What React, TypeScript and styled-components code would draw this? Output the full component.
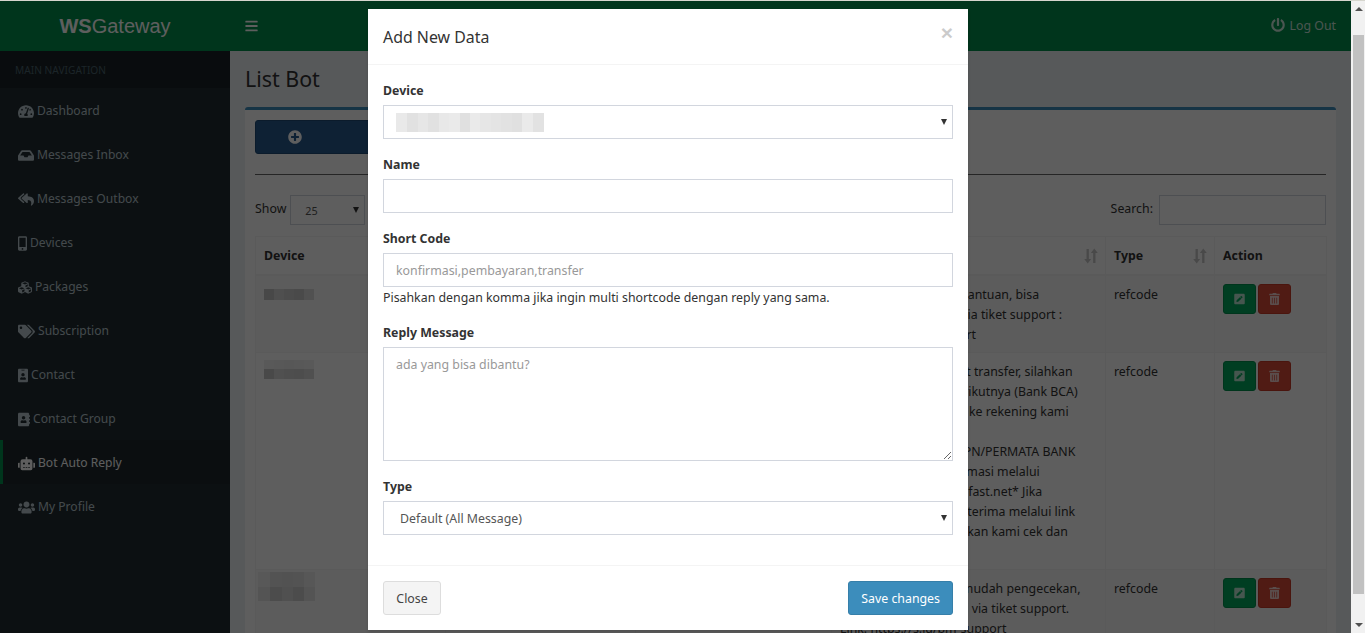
import React from "react";
import styled, { createGlobalStyle } from "styled-components";
import {
  FaTachometerAlt, FaInbox, FaReplyAll, FaMobileAlt, FaCubes, FaTags, FaIdBadge,
  FaAddressBook, FaRobot, FaUsers, FaPowerOff, FaBars, FaPlusCircle, FaPenSquare, FaTrashAlt,
} from "react-icons/fa";

const sans = `"Noto Sans", "Open Sans", sans-serif`;
const base = "12.35px";

const Global = createGlobalStyle`
  html, body { margin: 0; padding: 0; height: 100%; overflow: hidden; background: #ecf0f5; }
  * { box-sizing: border-box; }
  body { font-family: ${sans}; font-size: ${base}; line-height: 20px; color: #333; }
`;

const Root = styled.div`
  height: 633px;
  display: flex;
  border-top: 1px solid #d6d6ce;
  overflow: hidden;
`;
const Page = styled.div`
  position: relative;
  width: 1351px;
  flex: none;
  height: 632px;
  display: flex;
  flex-direction: column;
`;
const Rail = styled.div`
  flex: 1;
  display: flex;
  flex-direction: column;
  background: #f1f1f1;
`;
const Arrow = styled.span<{ $dir: "up" | "down" }>`
  display: block;
  width: 0;
  height: 0;
  margin: ${(p) => (p.$dir === "up" ? "6px 0 24px 4px" : "29px 0 0 4px")};
  border-left: 4px solid transparent;
  border-right: 4px solid transparent;
  ${(p) => (p.$dir === "up" ? "border-bottom: 4px solid #505050;" : "border-top: 4px solid #505050;")}
`;
const Thumb = styled.div`
  width: 11px;
  height: 559px;
  margin-left: 2px;
  background: #c1c1c1;
`;
const Topbar = styled.header`
  height: 50px;
  flex: none;
  display: flex;
  align-items: center;
  background: #008f4d;
  color: #fff;
`;
const Logo = styled.div`
  width: 230px;
  text-align: center;
  font: 20px/50px "Liberation Sans", Arial, sans-serif;
  b { font-weight: 700; }
`;
const Burger = styled.span`
  margin-left: 15px;
  display: flex;
  svg { width: 13px; height: 14px; }
`;
const LogOut = styled.span`
  margin-left: auto;
  padding-right: 15px;
  display: flex;
  align-items: center;
  gap: 5px;
  color: rgba(255, 255, 255, 0.8);
  svg { width: 14px; height: 14px; position: relative; top: -1px; }
`;
const Middle = styled.div`
  flex: 1;
  display: flex;
  min-height: 0;
`;
const Sidebar = styled.aside`
  width: 230px;
  flex: none;
  background: #222d32;
`;
const NavHead = styled.div`
  height: 37px;
  padding: 1px 0 0 15px;
  background: #1a2226;
  color: #4b646f;
  font-size: 10.2px;
  line-height: 36px;
`;
const NavItem = styled.div<{ $active?: boolean; $w: number }>`
  height: 44px;
  padding: 2px 0 0 15px;
  display: flex;
  align-items: center;
  gap: 3px;
  font-size: 12.1px;
  border-left: 3px solid ${(p) => (p.$active ? "#008f4d" : "transparent")};
  background: ${(p) => (p.$active ? "#1e282c" : "transparent")};
  color: ${(p) => (p.$active ? "#fff" : "#b8c7ce")};
  svg { width: ${(p) => p.$w}px; height: 15px; flex: none; }
`;
const Content = styled.main`
  flex: 1;
  min-width: 0;
  padding: 15px 15px 0;
  overflow: hidden;
`;
const Title = styled.h1`
  margin: 0 0 15px;
  font-size: 21.4px;
  font-weight: 400;
  line-height: 26px;
`;
const Box = styled.section`
  background: #fff;
  border-top: 3px solid #3c8dbc;
  border-radius: 3px;
  padding: 10px;
  height: 600px;
`;
const AddButton = styled.button`
  height: 34px;
  width: 170px;
  padding: 0 0 0 32px;
  display: flex;
  align-items: center;
  background: #285b8e;
  border: 1px solid #1f4b75;
  border-radius: 3px;
  color: #fff;
  svg { width: 14px; height: 14px; flex: none; }
`;
const Rule = styled.hr`
  margin: 20px 0;
  border: 0;
  border-top: 1px solid #666;
`;
const Controls = styled.div`
  height: 30px;
  display: flex;
  justify-content: space-between;
`;
const Inline = styled.label`
  display: flex;
  align-items: flex-start;
  gap: 4px;
  line-height: 28px;
`;
const SelectWrap = styled.div`
  position: relative;
  &::after {
    content: "";
    position: absolute;
    right: 6px;
    top: 50%;
    margin-top: -3px;
    border-left: 3px solid transparent;
    border-right: 3px solid transparent;
    border-top: 6px solid #333;
    pointer-events: none;
  }
`;
const SmallSelect = styled.select`
  display: block;
  width: 75px;
  height: 30px;
  padding: 5px 14px;
  border: 1px solid #d2d6de;
  border-radius: 0;
  appearance: none;
  background-color: #fff;
  color: #555;
  font: 10.8px ${sans};
`;
const SearchInput = styled.input`
  width: 167px;
  height: 30px;
  margin-left: 2px;
  border: 1px solid #d2d6de;
  background: #fff;
`;
const Table = styled.table`
  width: 1071px;
  margin-top: 11px;
  border-collapse: collapse;
  table-layout: fixed;
  border: 1px solid #f4f4f4;
`;
const Th = styled.th`
  position: relative;
  padding: 9px 8px 8px;
  text-align: left;
  font-weight: 700;
  border: 1px solid #f4f4f4;
  border-bottom-width: 2px;
`;
const SortGlyph = styled.svg`
  position: absolute;
  right: 7px;
  top: 11px;
  width: 14px;
  height: 16px;
  color: rgba(0, 0, 0, 0.22);
`;
const Row = styled.tr<{ $odd?: boolean }>`
  background: ${(p) => (p.$odd ? "#f9f9f9" : "#fff")};
`;
const Td = styled.td`
  padding: 8px;
  vertical-align: top;
  border: 1px solid #f4f4f4;
  white-space: nowrap;
  overflow: hidden;
`;
const Lines = styled.div`
  padding-top: 1px;
  margin-bottom: -1px;
`;
const Line = styled.div`
  min-height: 20px;
`;
const Actions = styled.div`
  display: flex;
  gap: 2px;
`;
const IconButton = styled.button<{ $tone: string; $edge: string }>`
  width: 33px;
  height: 30px;
  padding: 0;
  display: flex;
  align-items: center;
  justify-content: center;
  background: ${(p) => p.$tone};
  border: 1px solid ${(p) => p.$edge};
  border-radius: 3px;
  color: rgba(255, 255, 255, 0.75);
  svg { width: 11px; height: 12px; }
`;
const MosaicSvg = styled.svg<{ $x: number; $y: number }>`
  display: block;
  margin-left: ${(p) => p.$x}px;
  margin-top: ${(p) => p.$y}px;
`;
const Overlay = styled.div`
  position: absolute;
  inset: 0;
  overflow: hidden;
  background: rgba(0, 0, 0, 0.63);
  padding-right: 15px;
`;
const Dialog = styled.div`
  width: 600px;
  margin: 8px auto 0;
  background: #fff;
  box-shadow: 0 2px 3px rgba(0, 0, 0, 0.125);
`;
const DialogHead = styled.div`
  height: 56px;
  padding: 16px 15px 0;
  display: flex;
  justify-content: space-between;
  border-bottom: 1px solid #f4f4f4;
`;
const DialogTitle = styled.h4`
  margin: 0;
  font-size: 15.9px;
  font-weight: 400;
  line-height: 25px;
`;
const CloseX = styled.button`
  padding: 0;
  height: 18px;
  margin-top: -1px;
  border: 0;
  background: none;
  color: #000;
  opacity: 0.2;
  font: 700 21px/18px "Liberation Sans", Arial, sans-serif;
`;
const DialogBody = styled.div`
  padding: 15px;
`;
const Group = styled.div`
  margin-bottom: 15px;
`;
const Label = styled.label`
  display: block;
  padding-top: 1px;
  margin-bottom: 4px;
  font-weight: 700;
`;
const fieldCss = `
  display: block;
  width: 100%;
  padding: 6px 12px;
  border: 1px solid #d2d6de;
  border-radius: 0;
  background-color: #fff;
  color: #555;
  font: ${base}/20px ${sans};
  &::placeholder { color: #999; opacity: 1; }
`;
const Select = styled.select`
  ${fieldCss}
  height: 34px;
  padding: 7px 12px 5px 16px;
  appearance: none;
`;
const Input = styled.input`
  ${fieldCss}
  height: 34px;
`;
const TextArea = styled.textarea`
  ${fieldCss}
  height: 114px;
  padding-top: 7px;
  resize: vertical;
`;
const Help = styled.div`
  padding-top: 1px;
  margin-bottom: -1px;
`;
const SelectMask = styled.span`
  position: absolute;
  left: 13px;
  top: 8px;
  display: block;
  line-height: 0;
`;
const DialogFoot = styled.div`
  padding: 15px;
  display: flex;
  justify-content: space-between;
  border-top: 1px solid #f4f4f4;
`;
const FootButton = styled.button<{ $primary?: boolean }>`
  height: 34px;
  min-width: 58px;
  padding: 2px 12px 0;
  border: 1px solid ${(p) => (p.$primary ? "#367fa9" : "#ddd")};
  border-radius: 3px;
  background: ${(p) => (p.$primary ? "#3c8dbc" : "#f4f4f4")};
  color: ${(p) => (p.$primary ? "#fff" : "#444")};
  font: ${base}/20px ${sans};
`;

const Mosaic = ({ xs, rows, x = 0, y = 0 }: { xs: number[]; rows: { h: number; c: string[] }[]; x?: number; y?: number }) => {
  const width = xs.reduce((a, b) => a + b, 0);
  const height = rows.reduce((a, r) => a + r.h, 0);
  let top = 0;
  return (
    <MosaicSvg $x={x} $y={y} width={width} height={height} viewBox={`0 0 ${width} ${height}`} shapeRendering="crispEdges">
      {rows.map((r, i) => {
        let left = 0;
        const cells = xs.map((w, j) => {
          const el = <rect key={j} x={left} y={top} width={w} height={r.h} fill={r.c[j]} />;
          left += w;
          return el;
        });
        top += r.h;
        return <g key={i}>{cells}</g>;
      })}
    </MosaicSvg>
  );
};

const Sort = () => (
  <SortGlyph viewBox="0 0 14 16" fill="currentColor">
    <path d="M2.5 1h2.4v10h2.3L3.7 15.5 0.2 11h2.3z" />
    <path d="M9.1 15h2.4V5h2.3L10.3 0.5 6.8 5h2.3z" />
  </SortGlyph>
);

const nav = [
  [FaTachometerAlt, "Dashboard", 16], [FaInbox, "Messages Inbox", 16], [FaReplyAll, "Messages Outbox", 16],
  [FaMobileAlt, "Devices", 9], [FaCubes, "Packages", 14], [FaTags, "Subscription", 17], [FaIdBadge, "Contact", 10],
  [FaAddressBook, "Contact Group", 12], [FaRobot, "Bot Auto Reply", 17], [FaUsers, "My Profile", 17],
] as const;

const rowsData = [
  {
    odd: true,
    mosaic: <Mosaic xs={[10, 10, 10, 10, 10]} y={5} rows={[{ h: 11, c: ["#c4c4c4", "#d6d6d6", "#cdcdcd", "#c8c8c8", "#dcdcdc"] }]} />,
    lines: ["Jika kalian butuhkan bantuan, bisa", "atau hubungi admin via tiket support :", "https://s.id/bm-support"],
  },
  {
    odd: false,
    mosaic: <Mosaic xs={[10, 10, 10, 10, 10]} rows={[{ h: 9, c: ["#f0f0f0", "#eeeeee", "#ececec", "#eeeeee", "#f2f2f2"] }, { h: 10, c: ["#c6c6c6", "#d8d8d8", "#d4d4d4", "#d2d2d2", "#dadada"] }]} y={-1} />,
    lines: [
      "Jika pembayaran lewat transfer, silahkan", "lakukan 2 langkah berikutnya (Bank BCA)", "Mohon cepat transfer ke rekening kami", "",
      "MANDIRI/BNI/BRI/BTPN/PERMATA BANK", "Kemudian buat konfirmasi melalui", "*https://www.paymenfast.net* Jika",
      "pembayaran belum diterima melalui link", "Mohon ditunggu, biarkan kami cek dan", "proses.",
    ],
  },
  {
    odd: true,
    mosaic: <Mosaic xs={[12, 12, 11, 11, 11]} x={-6} y={-6} rows={[{ h: 15, c: ["#eeeeee", "#e2e2e2", "#dedede", "#e0e0e0", "#ebebeb"] }, { h: 14, c: ["#e4e4e4", "#cfcfcf", "#d8d8d8", "#cfcfcf", "#e4e4e4"] }]} />,
    lines: ["Supaya bisa mempermudah pengecekan,", "silahkan isi konfirmasi via tiket support.", "Link: https://s.id/bm-support"],
  },
];

export default function App() {
  return (
    <Root>
      <Global />
      <Page>
        <Topbar>
          <Logo><b>WS</b>Gateway</Logo>
          <Burger><FaBars /></Burger>
          <LogOut><FaPowerOff /> Log Out</LogOut>
        </Topbar>
        <Middle>
          <Sidebar>
            <NavHead>MAIN NAVIGATION</NavHead>
            {nav.map(([Icon, text, w]) => (
              <NavItem key={text} $w={w} $active={text === "Bot Auto Reply"}>
                <Icon />
                {text}
              </NavItem>
            ))}
          </Sidebar>
          <Content>
            <Title>List Bot</Title>
            <Box>
              <AddButton><FaPlusCircle /></AddButton>
              <Rule />
              <Controls>
                <Inline>
                  Show
                  <SelectWrap>
                    <SmallSelect defaultValue="25"><option>25</option></SmallSelect>
                  </SelectWrap>
                  entries
                </Inline>
                <Inline>
                  Search:
                  <SearchInput />
                </Inline>
              </Controls>
              <Table>
                <colgroup>
                  <col style={{ width: 190 }} />
                  <col style={{ width: 190 }} />
                  <col style={{ width: 196 }} />
                  <col style={{ width: 274 }} />
                  <col style={{ width: 109 }} />
                  <col style={{ width: 112 }} />
                </colgroup>
                <thead>
                  <tr>
                    <Th>Device</Th>
                    <Th>Name<Sort /></Th>
                    <Th>Short Code<Sort /></Th>
                    <Th>Reply Message<Sort /></Th>
                    <Th>Type<Sort /></Th>
                    <Th>Action</Th>
                  </tr>
                </thead>
                <tbody>
                  {rowsData.map((r, i) => (
                    <Row key={i} $odd={r.odd}>
                      <Td>{r.mosaic}</Td>
                      <Td />
                      <Td />
                      <Td><Lines>{r.lines.map((l, j) => <Line key={j}>{l}</Line>)}</Lines></Td>
                      <Td><Lines>refcode</Lines></Td>
                      <Td>
                        <Actions>
                          <IconButton $tone="#00a85c" $edge="#008f4d"><FaPenSquare /></IconButton>
                          <IconButton $tone="#d84a38" $edge="#c93a28"><FaTrashAlt /></IconButton>
                        </Actions>
                      </Td>
                    </Row>
                  ))}
                </tbody>
              </Table>
            </Box>
          </Content>
        </Middle>
        <Overlay>
          <Dialog>
            <DialogHead>
              <DialogTitle>Add New Data</DialogTitle>
              <CloseX>×</CloseX>
            </DialogHead>
            <DialogBody>
              <Group>
                <Label>Device</Label>
                <SelectWrap>
                  <Select><option>&nbsp;</option></Select>
                  <SelectMask>
                    <Mosaic
                      xs={[11, 11, 10, 11, 10, 11, 10, 10, 11, 10, 11, 10, 11, 11]}
                      rows={[{ h: 19, c: ["#e9e9e9", "#e1e1e1", "#e6e6e6", "#e1e1e1", "#e8e8e8", "#eaeaea", "#e0e0e0", "#eaeaea", "#e6e6e6", "#e4e4e4", "#e2e2e2", "#e0e0e0", "#eaeaea", "#e2e2e2"] }]}
                    />
                  </SelectMask>
                </SelectWrap>
              </Group>
              <Group>
                <Label>Name</Label>
                <Input />
              </Group>
              <Group>
                <Label>Short Code</Label>
                <Input placeholder="konfirmasi,pembayaran,transfer" />
                <Help>Pisahkan dengan komma jika ingin multi shortcode dengan reply yang sama.</Help>
              </Group>
              <Group>
                <Label>Reply Message</Label>
                <TextArea placeholder="ada yang bisa dibantu?" />
              </Group>
              <Group>
                <Label>Type</Label>
                <SelectWrap>
                  <Select><option>Default (All Message)</option></Select>
                </SelectWrap>
              </Group>
            </DialogBody>
            <DialogFoot>
              <FootButton>Close</FootButton>
              <FootButton $primary>Save changes</FootButton>
            </DialogFoot>
          </Dialog>
        </Overlay>
      </Page>
      <Rail>
        <Arrow $dir="up" />
        <Thumb />
        <Arrow $dir="down" />
      </Rail>
    </Root>
  );
}
